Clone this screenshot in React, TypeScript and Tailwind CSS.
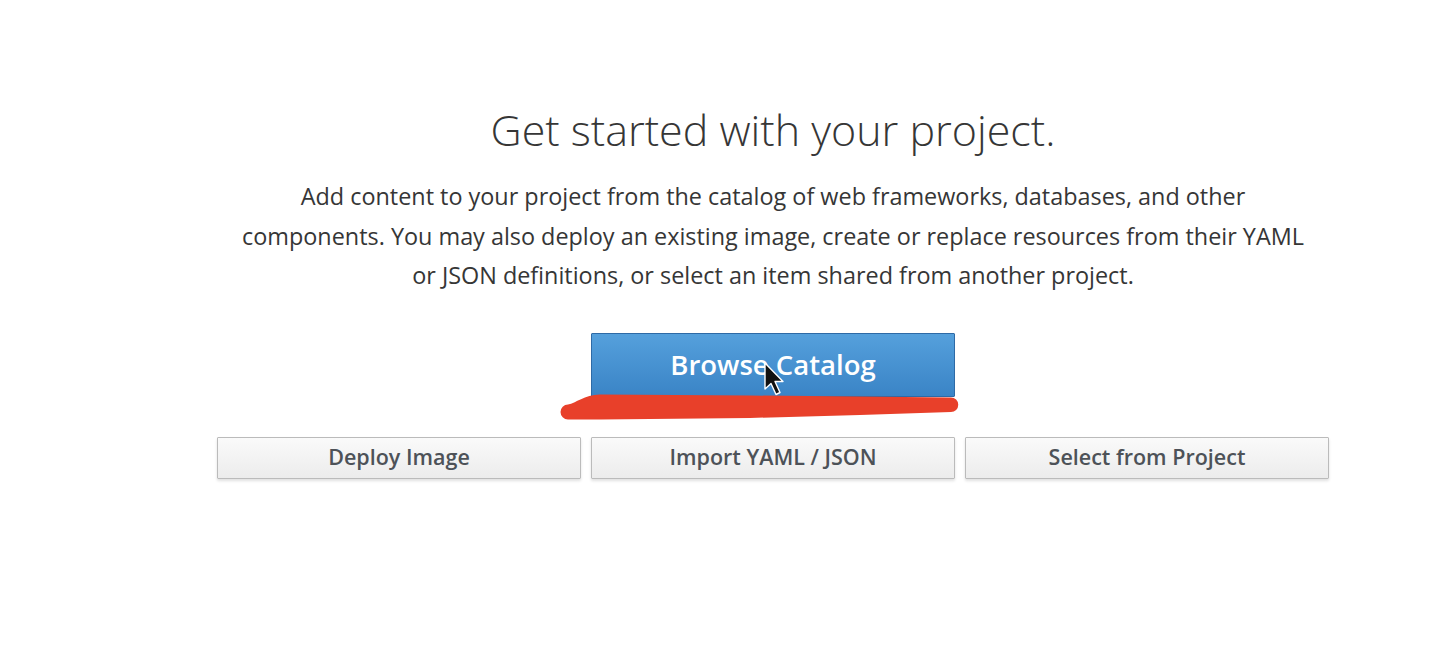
import React from 'react';

const font = { fontFamily: '"Open Sans", "Noto Sans", Arial, sans-serif' };

function SecondaryButton({ label }: { label: string }) {
  return (
    <button className="h-[42px] rounded-[1px] border border-[#bbbbbb] bg-gradient-to-b from-[#fafafa] to-[#ececec] text-[21.5px] font-semibold text-[#4d5258] shadow-[0_2px_3px_rgba(0,0,0,0.12)]">
      {label}
    </button>
  );
}

export default function App() {
  return (
    <div className="min-h-[668px] w-full bg-white" style={font}>
      <div className="flex justify-center pl-[98px] pt-[101px]">
        <div className="flex w-[1112px] flex-col items-center">
          <h1 className="text-[43px] font-light leading-[57px] text-[#363636]">
            Get started with your project.
          </h1>
          <p className="mt-[19px] whitespace-nowrap text-center text-[23.4px] leading-[39.5px] text-[#363636]">
            Add content to your project from the catalog of web frameworks, databases, and other
            <br />
            components. You may also deploy an existing image, create or replace resources from their YAML
            <br />
            or JSON definitions, or select an item shared from another project.
          </p>

          <div className="relative mt-[37px] grid w-full grid-cols-3 gap-[10px]">
            <div />
            <button className="h-[64px] rounded-[1px] border border-[#2e6aa6] bg-gradient-to-b from-[#55a0dc] to-[#3a84c6] text-[27.5px] font-semibold text-white">
              Browse Catalog
            </button>
            <div />
            {/* hand-drawn red underline */}
            <svg
              className="pointer-events-none absolute left-[-217px] top-0 overflow-visible"
              width="1"
              height="1"
            >
              <g transform="translate(0,-333)">
                <path
                  d="M 568 404.5 C 576 403, 584 395, 600 394.5 L 750 395.5 L 951 397.5 A 7.25 7.25 0 0 1 951 412 L 860 415 L 750 418 L 600 419.5 L 568 419.5 A 7.5 7.5 0 0 1 568 404.5 Z"
                  fill="#e8402a"
                />
                {/* mouse cursor */}
                <path
                  d="M 765 363 L 765 389 L 771 383.5 L 776 394.5 L 780 392.5 L 775 381.5 L 783 381.5 Z"
                  fill="#111"
                  stroke="#fff"
                  strokeWidth="1.4"
                  strokeLinejoin="round"
                />
              </g>
            </svg>
          </div>

          <div className="mt-[40px] grid w-full grid-cols-3 gap-[10px]">
            <SecondaryButton label="Deploy Image" />
            <SecondaryButton label="Import YAML / JSON" />
            <SecondaryButton label="Select from Project" />
          </div>
        </div>
      </div>
    </div>
  );
}
